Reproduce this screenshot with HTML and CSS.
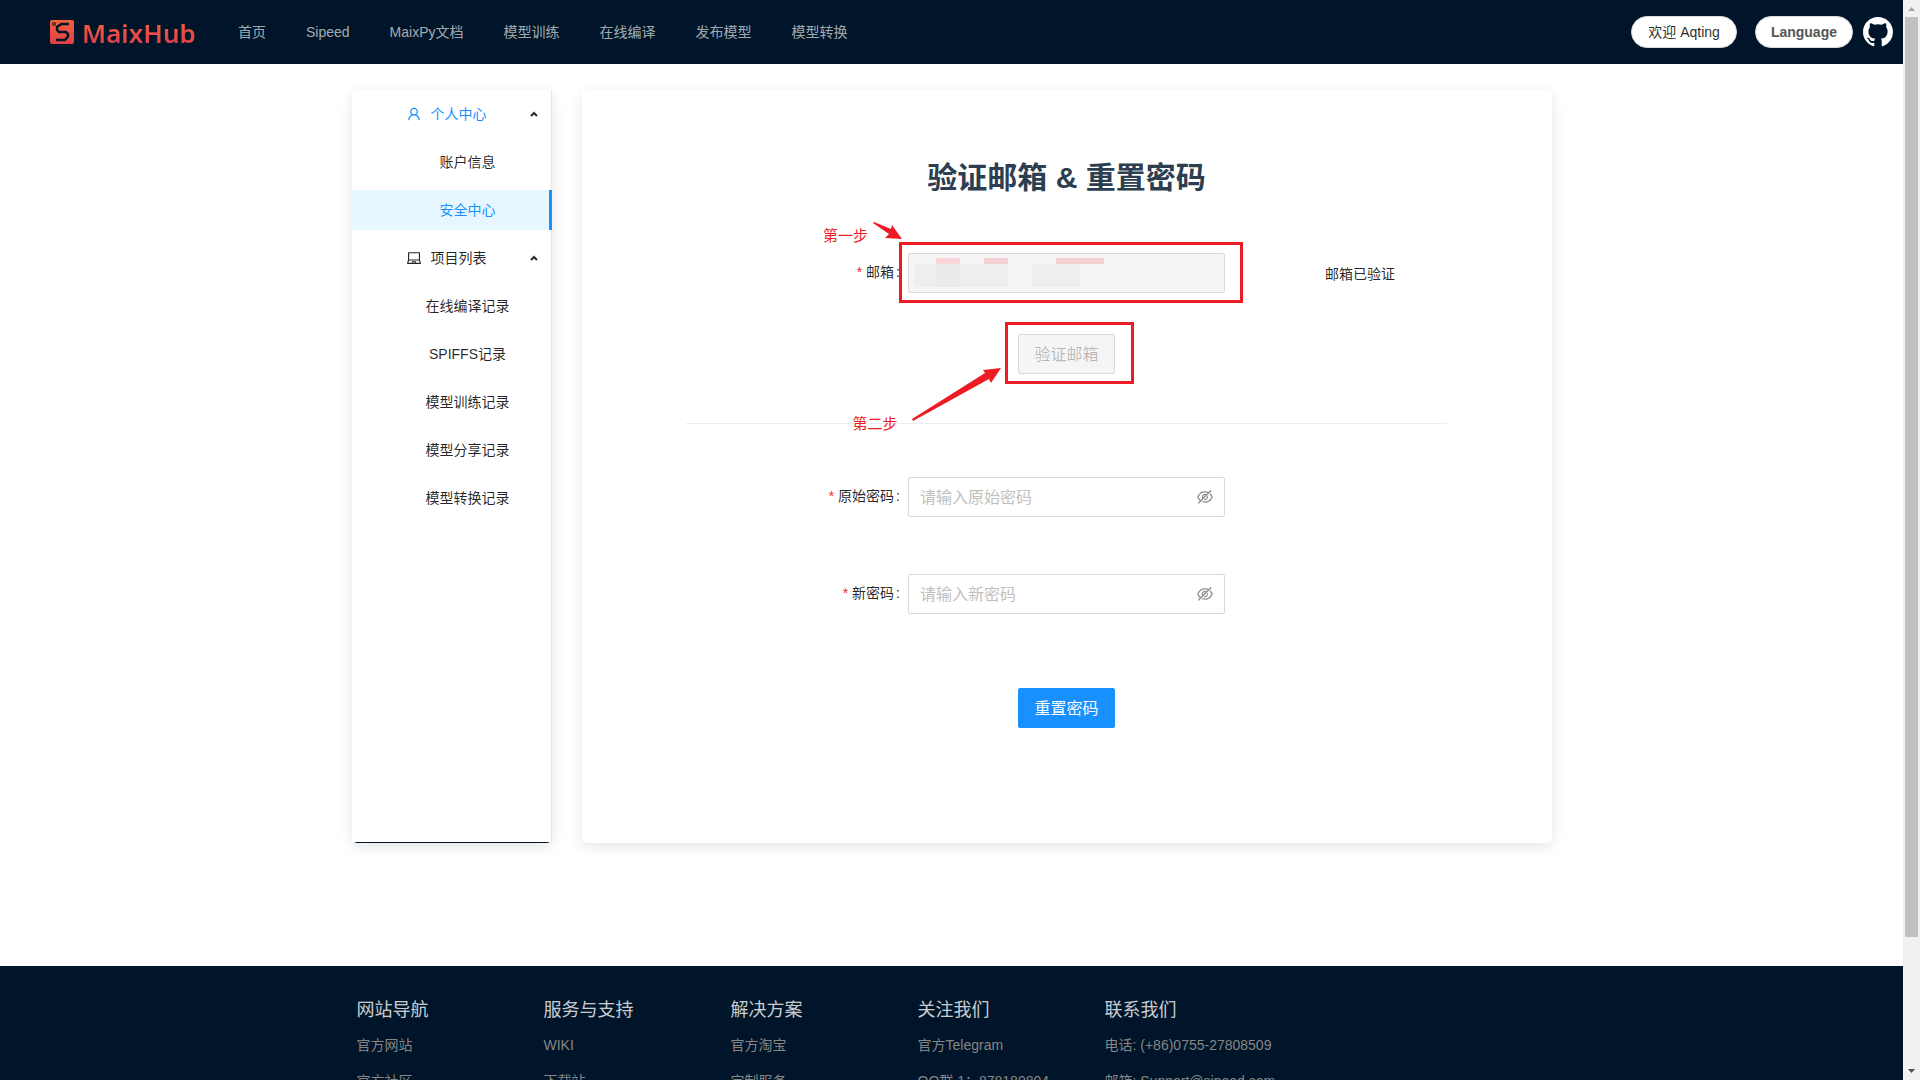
FILE: index.html
```html
<!DOCTYPE html>
<html lang="zh-CN">
<head>
<meta charset="utf-8">
<title>MaixHub</title>
<link rel="stylesheet" href="styles.css">
</head>
<body>
<div class="shell">
  <div class="page">
    <header class="header">
      <a class="logo" href="#">
        <svg class="logo-mark" viewBox="0 0 24 24" aria-hidden="true">
          <defs><linearGradient id="mark" x1="0" y1="0" x2="0" y2="1"><stop offset="0" stop-color="#f0603c"/><stop offset="1" stop-color="#e2404a"/></linearGradient></defs>
          <rect width="24" height="24" rx="2" fill="url(#mark)"/>
          <circle cx="4" cy="4" r="1.500" fill="none" stroke="#001529" stroke-width="1"/>
          <path d="M19 4h-7.500L7 7v3l2 2h7l2 2v2.500L15 20H6" fill="none" stroke="#001529" stroke-width="2.400"/>
        </svg>
        <span class="logo-text">MaixHub</span>
      </a>
      <nav class="nav">
        <a href="#">首页</a>
        <a href="#">Sipeed</a>
        <a href="#">MaixPy文档</a>
        <a href="#">模型训练</a>
        <a href="#">在线编译</a>
        <a href="#">发布模型</a>
        <a href="#">模型转换</a>
      </nav>
      <div class="header-tools">
        <button class="pill" type="button">欢迎 Aqting</button>
        <button class="pill pill-strong" type="button">Language</button>
        <a class="github" href="#" aria-label="GitHub">
          <svg viewBox="0 0 16 16" aria-hidden="true"><path d="M8 0C3.580 0 0 3.580 0 8c0 3.540 2.290 6.530 5.470 7.590.4.070.55-.17.55-.38 0-.19-.01-.82-.01-1.490-2.010.37-2.530-.49-2.690-.94-.09-.23-.48-.94-.82-1.130-.28-.15-.68-.52-.01-.53.63-.01 1.080.58 1.230.82.72 1.210 1.870.87 2.330.66.07-.52.28-.87.51-1.070-1.780-.2-3.640-.89-3.640-3.950 0-.87.31-1.590.82-2.150-.08-.2-.36-1.020.08-2.120 0 0 .67-.21 2.200.82.64-.18 1.320-.27 2-.27s1.360.09 2 .27c1.530-1.040 2.200-.82 2.200-.82.44 1.100.16 1.920.08 2.120.51.56.82 1.270.82 2.150 0 3.070-1.870 3.750-3.650 3.950.29.25.54.73.54 1.480 0 1.070-.01 1.930-.01 2.200 0 .21.15.46.55.38A8.010 8.010 0 0 0 16 8c0-4.420-3.580-8-8-8z"/></svg>
        </a>
      </div>
    </header>

    <main class="content">
      <aside class="sidebar">
        <nav class="menu">
          <button class="menu-title is-active" type="button">
            <span class="menu-label">
              <svg viewBox="64 64 896 896" aria-hidden="true"><path d="M858.500 763.600a374 374 0 0 0-80.600-119.500 375.630 375.630 0 0 0-119.500-80.600c-.4-.2-.8-.3-1.200-.5C719.500 518 760 444.700 760 362c0-137-111-248-248-248S264 225 264 362c0 82.700 40.500 156 102.800 201.100-.4.2-.8.3-1.200.5-44.800 18.900-85 46-119.500 80.600a375.630 375.630 0 0 0-80.600 119.500A371.700 371.700 0 0 0 136 901.800a8 8 0 0 0 8 8.200h60c4.400 0 7.900-3.500 8-7.800 2-77.200 33-149.500 87.800-204.300 56.700-56.700 132-87.900 212.200-87.900s155.500 31.200 212.200 87.900C779 752.700 810 825 812 902.200c.1 4.400 3.600 7.800 8 7.800h60a8 8 0 0 0 8-8.200c-1-47.800-10.900-94.300-29.500-138.200zM512 534c-45.900 0-89.100-17.900-121.600-50.400S340 407.900 340 362c0-45.900 17.900-89.100 50.400-121.600S466.100 190 512 190s89.100 17.900 121.600 50.400S684 316.100 684 362c0 45.900-17.900 89.100-50.400 121.600S557.900 534 512 534z"/></svg>
              个人中心
            </span>
            <svg class="chevron" viewBox="0 0 8 6" aria-hidden="true"><path d="M1 5l3-3 3 3"/></svg>
          </button>
          <a class="menu-item" href="#">账户信息</a>
          <a class="menu-item is-selected" href="#">安全中心</a>
          <button class="menu-title" type="button">
            <span class="menu-label">
              <svg viewBox="64 64 896 896" aria-hidden="true"><path d="M956.900 845.100L896.400 632V168c0-17.700-14.300-32-32-32h-704c-17.700 0-32 14.300-32 32v464L67.900 845.100C60.400 866 75.800 888 98 888h828.800c22.200 0 37.600-22 30.100-42.900zM200.400 208h624v395h-624V208zm228.300 608l8.100-37h150.300l8.100 37H428.700zm224 0l-19.100-86.700c-.8-3.700-4.100-6.300-7.800-6.300H398.200c-3.800 0-7 2.600-7.800 6.300L371.300 816H151l42.300-149h638.200l42.300 149H652.700z"/></svg>
              项目列表
            </span>
            <svg class="chevron" viewBox="0 0 8 6" aria-hidden="true"><path d="M1 5l3-3 3 3"/></svg>
          </button>
          <a class="menu-item" href="#">在线编译记录</a>
          <a class="menu-item" href="#">SPIFFS记录</a>
          <a class="menu-item" href="#">模型训练记录</a>
          <a class="menu-item" href="#">模型分享记录</a>
          <a class="menu-item" href="#">模型转换记录</a>
        </nav>
      </aside>

      <section class="card">
        <h1 class="card-title">验证邮箱 &amp; 重置密码</h1>
        <form class="verify-form">
          <div class="form-row">
            <label class="form-label" for="email">邮箱</label>
            <div class="field">
              <input class="input" id="email" type="email" disabled>
              <svg class="redaction" viewBox="0 0 198 29" aria-hidden="true">
                <path fill="#f9d5d9" d="M22 0h24v6H22z"/>
                <path fill="#f3d0d3" d="M70 0h24v6H70z"/>
                <path fill="#f5d1d3" d="M142 0h48v6h-48z"/>
                <path fill="#eeeeee" d="M0 6h94v23H0zM118 6h48v23h-48z"/>
                <path fill="#ebebeb" d="M22 6h24v23H22z"/>
              </svg>
              <span class="frame frame-email"></span>
              <span class="step step-one">第一步</span>
              <svg class="arrow arrow-one" viewBox="0 0 30 18" aria-hidden="true"><path d="M1 0L18 7 19 3 29 17 12 16 16 12 0 1z"/></svg>
            </div>
            <span class="form-status">邮箱已验证</span>
          </div>
          <div class="verify-action">
            <button class="btn" type="button" disabled>验证邮箱</button>
            <span class="frame frame-verify"></span>
            <span class="step step-two">第二步</span>
            <svg class="arrow arrow-two" viewBox="0 0 90 53" aria-hidden="true"><path d="M0 51L73 5 71 2 89 0 79 15 77 11 1 53z"/></svg>
          </div>
        </form>
        <hr class="divider">
        <form class="reset-form">
          <div class="form-row">
            <label class="form-label" for="old-password">原始密码</label>
            <div class="field">
              <input class="input" id="old-password" type="password" placeholder="请输入原始密码">
              <button class="eye" type="button" aria-label="显示密码"><svg viewBox="64 64 896 896" aria-hidden="true"><use href="#eye-off" x="64" y="64" width="896" height="896"/></svg></button>
            </div>
          </div>
          <div class="form-row">
            <label class="form-label" for="new-password">新密码</label>
            <div class="field">
              <input class="input" id="new-password" type="password" placeholder="请输入新密码">
              <button class="eye" type="button" aria-label="显示密码"><svg viewBox="64 64 896 896" aria-hidden="true"><use href="#eye-off" x="64" y="64" width="896" height="896"/></svg></button>
            </div>
          </div>
          <button class="btn btn-primary" type="submit">重置密码</button>
        </form>
      </section>
    </main>

    <footer class="footer">
      <div class="footer-grid">
        <section><h2>网站导航</h2><a href="#">官方网站</a><a href="#">官方社区</a></section>
        <section><h2>服务与支持</h2><a href="#">WIKI</a><a href="#">下载站</a></section>
        <section><h2>解决方案</h2><a href="#">官方淘宝</a><a href="#">定制服务</a></section>
        <section><h2>关注我们</h2><a href="#">官方Telegram</a><a href="#">QQ群 1：878189804</a></section>
        <section><h2>联系我们</h2><a href="#">电话: (+86)0755-27808509</a><a href="#">邮箱: Support@sipeed.com</a></section>
      </div>
    </footer>
  </div>

  <div class="scrollbar" aria-hidden="true">
    <svg class="scroll-up" viewBox="0 0 17 17"><path d="M5 11l3.500-4 3.500 4z"/></svg>
    <div class="scroll-track"><div class="scroll-thumb"></div></div>
    <svg class="scroll-down" viewBox="0 0 17 17"><path d="M5 6h7l-3.500 4z"/></svg>
  </div>
</div>

<svg class="symbols" aria-hidden="true">
  <symbol id="eye-off" viewBox="64 64 896 896"><path d="M942.200 486.200Q889.470 375.110 816.700 305l-50.880 50.880C807.310 395.530 843.450 447.400 874.700 512 791.500 684.200 673.400 766 512 766q-72.670 0-133.870-22.380L323 798.750Q408 838 512 838q288.300 0 430.200-300.300a60.290 60.290 0 0 0 0-51.500zm-63.570-320.640L836 122.880a8 8 0 0 0-11.320 0L715.310 232.200Q624.860 186 512 186q-288.300 0-430.200 300.300a60.300 60.300 0 0 0 0 51.500q56.690 119.400 136.500 191.410L112.480 835a8 8 0 0 0 0 11.310L155.170 889a8 8 0 0 0 11.310 0l712.150-712.120a8 8 0 0 0 0-11.320zM149.300 512C232.600 339.800 350.700 258 512 258c54.540 0 104.130 9.360 149.120 28.390l-70.300 70.300a176 176 0 0 0-238.130 238.130l-83.420 83.420C223.100 637.490 183.300 582.280 149.300 512zm246.700 0a112.110 112.110 0 0 1 146.200-106.690L401.310 546.200A112 112 0 0 1 396 512z"/><path d="M508 624c-3.460 0-6.870-.16-10.250-.47l-52.820 52.820a176.090 176.090 0 0 0 227.420-227.420l-52.820 52.820c.31 3.380.47 6.790.47 10.250a111.940 111.940 0 0 1-112 112z"/></symbol>
</svg>
</body>
</html>
```
FILE: styles.css
```css
*,
*::before,
*::after {
  box-sizing: border-box;
}

body {
  margin: 0;
  background: #fff;
  color: rgba(0, 0, 0, 0.85);
  font: 14px/22px "Liberation Sans", "Noto Sans CJK SC", sans-serif;
}

a {
  color: inherit;
  text-decoration: none;
}

button,
input {
  margin: 0;
  font: inherit;
  color: inherit;
}

svg {
  display: block;
  fill: currentColor;
}

.symbols {
  display: none;
}

.shell {
  display: flex;
  height: 100vh;
}

.page {
  flex: 1;
  min-width: 0;
  overflow: hidden;
}

/* Header */
.header {
  display: flex;
  align-items: center;
  height: 64px;
  padding: 0 10px 0 50px;
  background: #001529;
}

.logo {
  display: flex;
  align-items: center;
  gap: 8px;
  width: 168px;
}

.logo-mark {
  width: 24px;
  height: 24px;
}

.logo-text {
  padding-top: 2px;
  font: 600 26px/32px "Noto Sans", sans-serif;
  color: transparent;
  background: linear-gradient(#f0603c 20%, #e2404a 80%);
  background-clip: text;
}

.nav {
  display: flex;
  color: rgba(255, 255, 255, 0.65);
  line-height: 64px;
}

.nav a {
  padding: 0 20px;
}

.header-tools {
  display: flex;
  align-items: center;
  margin-left: auto;
}

.pill {
  height: 32px;
  margin-right: 18px;
  padding: 0 16px;
  border: 1px solid #d9d9d9;
  border-radius: 16px;
  background: #fff;
}

.pill-strong {
  margin-right: 10px;
  padding: 0 15px;
  color: #555;
  font-weight: 700;
}

.github {
  color: #fff;
}

.github svg {
  width: 30px;
  height: 30px;
}

/* Content */
.content {
  display: grid;
  grid-template-columns: 200px 1fr;
  gap: 30px;
  max-width: 1201px;
  margin: 26px auto 123px;
  padding-left: 1px;
}

.sidebar {
  display: flex;
  padding-bottom: 1px;
  border-radius: 5px;
  background: #001529;
  box-shadow: 0 4px 14px rgba(0, 0, 0, 0.1);
}

.menu {
  display: flex;
  flex: 1;
  flex-direction: column;
  gap: 8px;
  padding-top: 4px;
  border-right: 1px solid #e8e8e8;
  background: #fff;
}

.menu-title {
  display: flex;
  align-items: center;
  height: 40px;
  padding: 0 13px 0 24px;
  border: 0;
  background: none;
}

.menu-label {
  display: flex;
  flex: 1;
  align-items: center;
  justify-content: center;
  gap: 10px;
  padding-right: 13px;
}

.menu-label svg {
  width: 14px;
  height: 14px;
}

.is-active .menu-label {
  color: #1890ff;
}

.chevron {
  width: 8px;
  height: 6px;
  fill: none;
  stroke: currentColor;
  stroke-width: 2;
}

.menu-item {
  padding: 0 16px 0 48px;
  line-height: 40px;
  text-align: center;
}

.menu-item.is-selected {
  margin-right: -1px;
  padding-right: 14px;
  border-right: 3px solid #1890ff;
  background: #e6f7ff;
  color: #1890ff;
}

.card {
  padding: 63px 10px 115px 9px;
  border-radius: 5px;
  background: #fff;
  box-shadow: 0 4px 14px rgba(0, 0, 0, 0.1);
}

.card-title {
  margin: 0 0 50px;
  color: #2c3e50;
  font-size: 30px;
  line-height: 50px;
  text-align: center;
}

.form-row {
  display: grid;
  grid-template-columns: repeat(3, 1fr);
  align-items: start;
}

.form-label {
  padding-right: 8px;
  line-height: 38px;
  text-align: right;
}

.form-label::before {
  content: "*";
  margin-right: 4px;
  color: #f5222d;
}

.form-label::after {
  content: ":";
  margin-left: 2px;
}

.form-status {
  padding-left: 100px;
  line-height: 42px;
}

.field {
  position: relative;
}

.input {
  display: block;
  width: 100%;
  height: 40px;
  padding: 2px 40px 0 11px;
  border: 1px solid #d9d9d9;
  border-radius: 2px;
  background: #fff;
  font-size: 16px;
}

.input:disabled {
  background: #f5f5f5;
}

.input::placeholder {
  color: #bfbfbf;
}

.eye {
  position: absolute;
  top: 12px;
  right: 12px;
  padding: 0;
  border: 0;
  background: none;
  color: rgba(0, 0, 0, 0.45);
}

.eye svg {
  width: 16px;
  height: 16px;
}

.btn {
  display: block;
  height: 40px;
  padding: 2px 15px 0;
  border: 1px solid #d9d9d9;
  border-radius: 2px;
  background: #fff;
  font-size: 16px;
}

.btn:disabled {
  background: #f5f5f5;
  color: rgba(0, 0, 0, 0.25);
}

.btn-primary {
  border-color: #1890ff;
  background: #1890ff;
  color: #fff;
}

.verify-action {
  position: relative;
  width: fit-content;
  margin: 39px auto 0;
}

.divider {
  width: 80%;
  height: 1px;
  margin: 49px auto 53px;
  border: 0;
  background: #ededed;
}

.reset-form .form-row + .form-row {
  margin-top: 57px;
}

.reset-form .btn {
  margin: 74px auto 0;
}

/* Guide marks over the form */
.redaction {
  position: absolute;
  top: 5px;
  left: 6px;
  width: 198px;
  height: 29px;
}

.frame {
  position: absolute;
  border: 3px solid #ed1c24;
  pointer-events: none;
}

.frame-email {
  inset: -11px -18px -10px -9px;
}

.frame-verify {
  inset: -12px -19px -10px -13px;
}

.step {
  position: absolute;
  color: #ed1c24;
  font-size: 15px;
  white-space: nowrap;
}

.step-one {
  top: -28px;
  left: -85px;
}

.step-two {
  top: 79px;
  left: -166px;
}

.arrow {
  position: absolute;
  color: #ed1c24;
}

.arrow-one {
  top: -31px;
  left: -35px;
  width: 30px;
  height: 18px;
}

.arrow-two {
  top: 34px;
  left: -106px;
  width: 90px;
  height: 53px;
}

/* Footer */
.footer {
  padding: 30px 0 40px;
  background: #001529;
}

.footer-grid {
  display: grid;
  grid-template-columns: repeat(4, 187px) 1fr;
  max-width: 1200px;
  margin: 0 auto;
  padding: 0 5px;
}

.footer h2 {
  margin: 0 0 3px;
  color: rgba(255, 255, 255, 0.8);
  font-size: 18px;
  font-weight: 400;
  line-height: 28px;
}

.footer a {
  display: block;
  color: #868686;
  line-height: 36px;
}

/* Window scrollbar */
.scrollbar {
  display: flex;
  flex-direction: column;
  width: 17px;
  background: #f1f1f1;
}

.scrollbar svg {
  width: 17px;
  height: 17px;
}

.scroll-up {
  color: #a3a3a3;
}

.scroll-down {
  color: #505050;
}

.scroll-track {
  flex: 1;
  padding: 0 2px;
}

.scroll-thumb {
  height: 88%;
  background: #c1c1c1;
}
```
